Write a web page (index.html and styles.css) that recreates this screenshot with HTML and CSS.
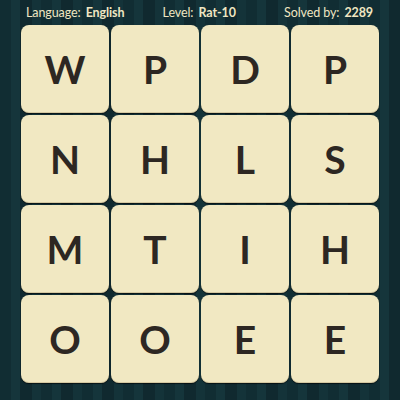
FILE: index.html
```html
<!DOCTYPE html>
<html>
<head>
<meta charset="utf-8">
<link rel="stylesheet" href="styles.css">
</head>
<body>
<div class="page">
  <div class="header">
    <span class="item"><span class="label">Language:</span> <b>English</b></span>
    <span class="item mid"><span class="label">Level:</span> <b>Rat-10</b></span>
    <span class="item"><span class="label">Solved by:</span> <b>2289</b></span>
  </div>
  <div class="grid">
    <div class="tile">W</div><div class="tile">P</div><div class="tile">D</div><div class="tile">P</div>
    <div class="tile">N</div><div class="tile">H</div><div class="tile">L</div><div class="tile">S</div>
    <div class="tile">M</div><div class="tile">T</div><div class="tile">I</div><div class="tile">H</div>
    <div class="tile">O</div><div class="tile">O</div><div class="tile">E</div><div class="tile">E</div>
  </div>
</div>
</body>
</html>
```
FILE: styles.css
```css
html, body {
  margin: 0;
  padding: 0;
}
.page {
  width: 400px;
  height: 400px;
  overflow: hidden;
  background-color: #12303a;
  background-image: repeating-linear-gradient(90deg,
    #112d33 0px, #112d33 11px,
    #15353b 11px, #15353b 20px,
    #10292f 20px, #10292f 32px,
    #143339 32px, #143339 41px);
  font-family: Lato, "Open Sans", sans-serif;
}
.header {
  height: 25px;
  display: flex;
  justify-content: space-between;
  align-items: center;
  padding: 0 27px 0 26px;
  color: #efe6c2;
  font-size: 12.5px;
  letter-spacing: -0.1px;
  line-height: 25px;
}
.mid {
  margin-left: -10px;
}
.label {
  font-weight: 400;
}
.item b {
  font-weight: 700;
  margin-left: 2px;
}
.grid {
  display: grid;
  grid-template-columns: repeat(4, 88px);
  grid-auto-rows: 88px;
  gap: 2px;
  padding-left: 21px;
}
.tile {
  background: #f1e8c2;
  border-radius: 8px;
  box-shadow: 0 1px 1px rgba(0,0,0,0.6), inset 0 -1px 0 rgba(160,140,100,0.35);
  display: flex;
  align-items: center;
  justify-content: center;
  color: #2d2722;
  font-size: 39px;
  font-weight: 700;
}
```
